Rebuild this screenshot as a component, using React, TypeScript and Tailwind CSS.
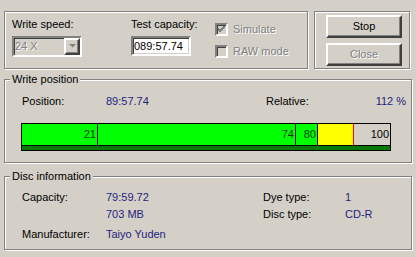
const etched = "border border-[#808080] shadow-[inset_1px_1px_0_#fff,1px_1px_0_#fff]";
const sunken =
  "border-2 border-t-[#808080] border-l-[#808080] border-b-white border-r-white shadow-[inset_1px_1px_0_#404040,inset_-1px_-1px_0_#d4d0c8]";
const raised =
  "border-2 border-t-white border-l-white border-b-[#404040] border-r-[#404040] shadow-[inset_-1px_-1px_0_#808080]";
const grayText = "text-[#808080] [text-shadow:1px_1px_0_#fff]";
const blue = "text-[#24247c]";

function CheckBox({ label, checked }: { label: string; checked?: boolean }) {
  return (
    <div className="flex items-center h-[13px] leading-[13px]">
      <div className={`w-[13px] h-[13px] bg-[#d4d0c8] flex items-center justify-center ${sunken}`}>
        {checked && (
          <svg width="7" height="7" viewBox="0 0 7 7">
            <path d="M0 2 L2 4 L7 -1 M0 3 L2 5 L7 0 M0 4 L2 6 L7 1" stroke="#808080" strokeWidth="1" fill="none" />
          </svg>
        )}
      </div>
      <span className={`ml-[5px] ${grayText}`}>{label}</span>
    </div>
  );
}

function Button({ label, disabled }: { label: string; disabled?: boolean }) {
  return (
    <div className={`w-[76px] h-[23px] flex items-center justify-center bg-[#d4d0c8] ${raised}`}>
      <span className={disabled ? grayText : "text-black"}>{label}</span>
    </div>
  );
}

type Seg = { w: number; bg: string; text?: string; end: string };

const segments: Seg[] = [
  { w: 75, bg: "bg-[#00ff00]", text: "21", end: "border-r border-black" },
  { w: 197, bg: "bg-[#00ff00]", text: "74", end: "border-r border-black" },
  { w: 21, bg: "bg-[#00ff00]", text: "80", end: "border-r border-black" },
  { w: 35, bg: "bg-[#ffff00]", end: "border-r border-[#ff0000]" },
  { w: 36, bg: "bg-[#d4d0c8]", text: "100", end: "" },
];

export default function App() {
  return (
    <div className="w-[416px] h-[257px] bg-[#d4d0c8] overflow-hidden px-[4px] pt-[11px] text-[11px] leading-[13px] text-black font-['Liberation_Sans',Arial,sans-serif]">
      {/* top row */}
      <div className="flex gap-[6px]">
        <div className={`w-[304px] h-[58px] flex pl-[7px] pt-[6px] ${etched}`}>
          <div className="w-[119px]">
            <div>Write speed:</div>
            <div className={`mt-[5px] w-[70px] h-[21px] flex items-center bg-[#d4d0c8] ${sunken}`}>
              <span className={`flex-1 pl-[1px] ${grayText}`}>24 X</span>
              <div className={`w-[16px] h-[17px] flex items-center justify-center ${raised}`}>
                <svg width="7" height="5" viewBox="0 0 7 5">
                  <path d="M1 1 L5 1 L3 3 Z" fill="#fff" />
                  <path d="M0 0 L7 0 L3.5 3.5 Z" fill="#808080" />
                </svg>
              </div>
            </div>
          </div>
          <div className="w-[84px]">
            <div>Test capacity:</div>
            <div className={`mt-[5px] w-[60px] h-[20px] bg-white flex items-center pl-[1px] ${sunken}`}>
              089:57.74
            </div>
          </div>
          <div className="pt-[5px] flex flex-col gap-[9px]">
            <CheckBox label="Simulate" checked />
            <CheckBox label="RAW mode" />
          </div>
        </div>
        <div className={`w-[96px] h-[58px] pl-[11px] pt-[3px] flex flex-col gap-[5px] ${etched}`}>
          <Button label="Stop" />
          <Button label="Close" disabled />
        </div>
      </div>

      {/* write position */}
      <fieldset className={`mt-[4px] h-[90px] ${etched}`}>
        <legend className="ml-[5px] px-[2px] bg-[#d4d0c8] leading-[13px]">Write position</legend>
        <div className="flex pl-[17px] pr-[5px] pt-[9px]">
          <span className="w-[84px]">Position:</span>
          <span className={`w-[160px] ${blue}`}>89:57.74</span>
          <span>Relative:</span>
          <span className={`flex-1 text-right ${blue}`}>112 %</span>
        </div>
        <div className="ml-[16px] mt-[15px] w-[370px] border border-black">
          <div className="flex h-[21px]">
            {segments.map((s, i) => (
              <div
                key={i}
                className={`${s.bg} ${s.end} flex items-center justify-end pr-[1px] text-[#0a3a0a]`}
                style={{ width: s.w + (s.end ? 1 : 0) }}
              >
                {s.text && <span className={s.text === "100" ? "text-black" : ""}>{s.text}</span>}
              </div>
            ))}
          </div>
          <div className="h-[5px] bg-[#087808] border-t border-black" />
        </div>
      </fieldset>

      {/* disc information */}
      <fieldset className={`mt-[7px] h-[80px] ${etched}`}>
        <legend className="ml-[5px] px-[2px] bg-[#d4d0c8] leading-[13px]">Disc information</legend>
        <div className="ml-[17px] pt-[8px] grid grid-cols-[84px_157px_82px_1fr]">
          <span>Capacity:</span>
          <span className={blue}>79:59.72</span>
          <span>Dye type:</span>
          <span className={blue}>1</span>
          <span className="mt-[4px]"></span>
          <span className={`mt-[4px] ${blue}`}>703 MB</span>
          <span className="mt-[4px]">Disc type:</span>
          <span className={`mt-[4px] ${blue}`}>CD-R</span>
          <span className="mt-[7px]">Manufacturer:</span>
          <span className={`mt-[7px] ${blue}`}>Taiyo Yuden</span>
        </div>
      </fieldset>
    </div>
  );
}
